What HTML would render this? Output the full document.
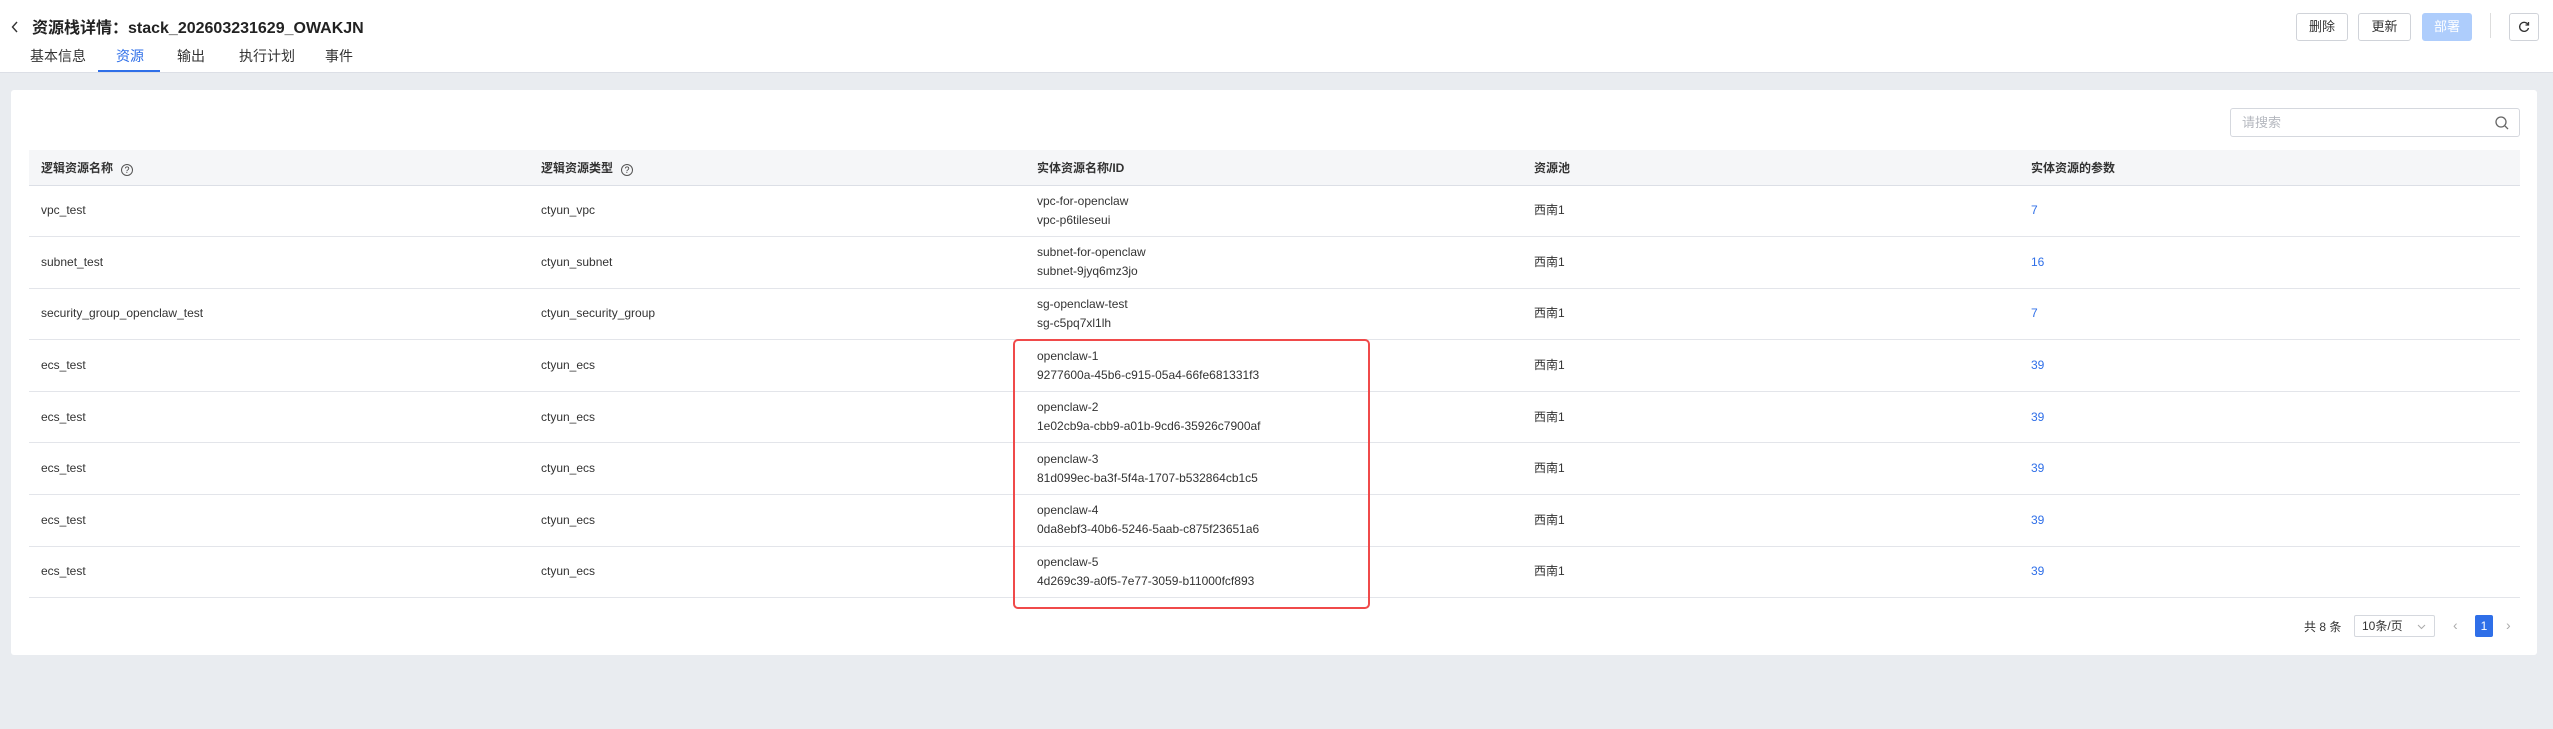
<!DOCTYPE html>
<html><head><meta charset="utf-8"><style>
*{box-sizing:border-box;margin:0;padding:0}
body{width:2553px;height:729px;background:#e9ecf0;font-family:"Liberation Sans","Noto Sans CJK SC",sans-serif;color:#333;position:relative;overflow:hidden;font-size:13px}
.top{position:absolute;left:0;top:0;width:2553px;height:73px;background:#fff;border-bottom:1px solid #dcdfe6}
.title{position:absolute;left:32px;top:14px;font-size:16px;font-weight:bold;color:#222}
.tabs{position:absolute;left:30px;top:46px;font-size:14px;color:#333}
.tabs span{position:absolute;white-space:nowrap}
.uline{position:absolute;left:98px;top:70px;width:62px;height:2px;background:#2f6fe8}
.btn{position:absolute;top:13px;height:28px;border:1px solid #d0d3d9;border-radius:3px;background:#fff;font-size:13px;text-align:center;line-height:26px;color:#333}
.card{position:absolute;left:11px;top:90px;width:2526px;height:565px;background:#fff;border-radius:3px}
.search{position:absolute;left:2230px;top:108px;width:290px;height:29px;border:1px solid #d5d8de;border-radius:3px;color:#b5b8bf;font-size:13px;line-height:27px;padding-left:11px}
table{position:absolute;left:29px;top:150px;width:2491px;border-collapse:collapse}
th{background:#f5f6f8;height:35px;text-align:left;font-weight:bold;font-size:12px;color:#333;border-bottom:1px solid #dcdfe6;padding-left:12px}
td{height:51.6px;border-bottom:1px solid #e3e5ea;padding-left:12px;font-size:12px;line-height:19px;color:#333}
td a{color:#2f6fe8;text-decoration:none}
.q{display:inline-block;width:12px;height:12px;border:1px solid #555;border-radius:50%;font-size:9px;line-height:10px;text-align:center;margin-left:8px;font-weight:normal;vertical-align:-1px}
.red{position:absolute;left:1013px;top:339px;width:357px;height:270px;border:2px solid #f04a4a;border-radius:5px}
</style></head><body>
<div class="top">
<svg style="position:absolute;left:11px;top:21px" width="8" height="12" viewBox="0 0 8 12"><path d="M6 1L1.5 6 6 11" fill="none" stroke="#333" stroke-width="1.4"/></svg>
<div class="title">资源栈详情：stack_202603231629_OWAKJN</div>
<div class="tabs"><span style="left:0">基本信息</span><span style="left:86px;color:#2f6fe8">资源</span><span style="left:147px">输出</span><span style="left:209px">执行计划</span><span style="left:295px">事件</span></div>
<div class="uline"></div>
<div class="btn" style="left:2296px;width:52px">删除</div>
<div class="btn" style="left:2358px;width:53px">更新</div>
<div class="btn" style="left:2422px;width:50px;background:#aecdfc;border-color:#aecdfc;color:#fff">部署</div>
<div style="position:absolute;left:2490px;top:13px;width:1px;height:25px;background:#ddd"></div>
<div class="btn" style="left:2509px;width:30px"><svg style="margin-top:7px" width="12" height="12" viewBox="0 0 12 12"><path d="M10 3.5A4.5 4.5 0 1 0 10.5 7" fill="none" stroke="#333" stroke-width="1.3"/><path d="M10.5 1v3h-3" fill="none" stroke="#333" stroke-width="1.3"/></svg></div>
</div>
<div class="card"></div>
<div class="search">请搜索<svg style="position:absolute;right:10px;top:7px" width="14" height="14" viewBox="0 0 14 14"><circle cx="6" cy="6" r="5" fill="none" stroke="#666" stroke-width="1.3"/><path d="M10 10l3 3" stroke="#666" stroke-width="1.3"/></svg></div>
<table>
<tr><th style="width:500px">逻辑资源名称<span class="q">?</span></th><th style="width:496px">逻辑资源类型<span class="q">?</span></th><th style="width:497px">实体资源名称/ID</th><th style="width:497px">资源池</th><th>实体资源的参数</th></tr>
<tr><td>vpc_test</td><td>ctyun_vpc</td><td>vpc-for-openclaw<br>vpc-p6tileseui</td><td>西南1</td><td><a>7</a></td></tr>
<tr><td>subnet_test</td><td>ctyun_subnet</td><td>subnet-for-openclaw<br>subnet-9jyq6mz3jo</td><td>西南1</td><td><a>16</a></td></tr>
<tr><td>security_group_openclaw_test</td><td>ctyun_security_group</td><td>sg-openclaw-test<br>sg-c5pq7xl1lh</td><td>西南1</td><td><a>7</a></td></tr>
<tr><td>ecs_test</td><td>ctyun_ecs</td><td>openclaw-1<br>9277600a-45b6-c915-05a4-66fe681331f3</td><td>西南1</td><td><a>39</a></td></tr>
<tr><td>ecs_test</td><td>ctyun_ecs</td><td>openclaw-2<br>1e02cb9a-cbb9-a01b-9cd6-35926c7900af</td><td>西南1</td><td><a>39</a></td></tr>
<tr><td>ecs_test</td><td>ctyun_ecs</td><td>openclaw-3<br>81d099ec-ba3f-5f4a-1707-b532864cb1c5</td><td>西南1</td><td><a>39</a></td></tr>
<tr><td>ecs_test</td><td>ctyun_ecs</td><td>openclaw-4<br>0da8ebf3-40b6-5246-5aab-c875f23651a6</td><td>西南1</td><td><a>39</a></td></tr>
<tr><td>ecs_test</td><td>ctyun_ecs</td><td>openclaw-5<br>4d269c39-a0f5-7e77-3059-b11000fcf893</td><td>西南1</td><td><a>39</a></td></tr>
</table>
<div class="red"></div>
<div style="position:absolute;left:2304px;top:618px;font-size:12px;color:#333">共 8 条</div>
<div style="position:absolute;left:2354px;top:615px;width:81px;height:22px;border:1px solid #d5d8de;border-radius:2px;font-size:12px;line-height:20px;padding-left:7px">10条/页<svg style="position:absolute;right:8px;top:8px" width="9" height="6" viewBox="0 0 9 6"><path d="M1 1l3.5 3.5L8 1" fill="none" stroke="#aaa"/></svg></div>
<div style="position:absolute;left:2453px;top:617px;color:#aaa;font-size:14px">‹</div>
<div style="position:absolute;left:2475px;top:615px;width:18px;height:22px;background:#2f6fe8;border-radius:2px;color:#fff;text-align:center;line-height:22px;font-size:12px">1</div>
<div style="position:absolute;left:2506px;top:617px;color:#aaa;font-size:14px">›</div>
</body></html>
